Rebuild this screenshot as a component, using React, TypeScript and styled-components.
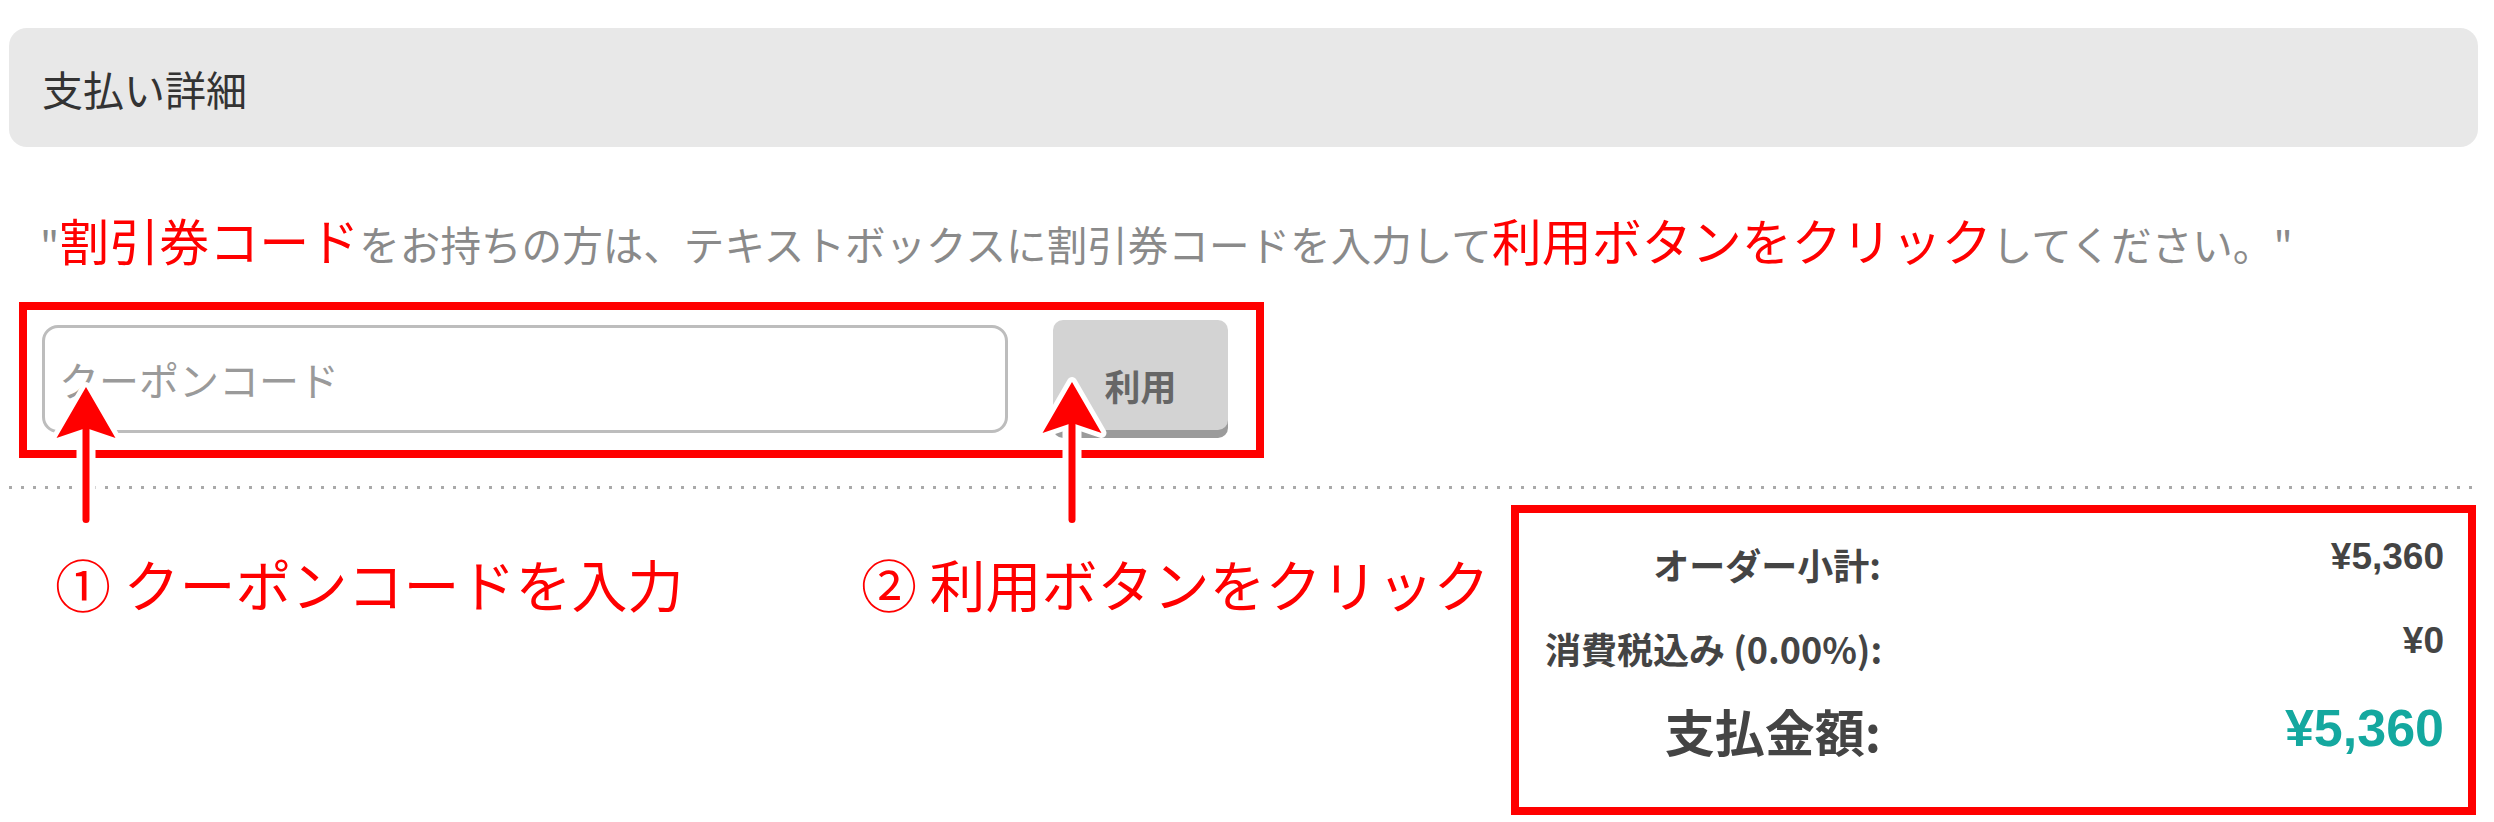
import styled, { createGlobalStyle } from "styled-components";

const GlobalStyle = createGlobalStyle`
  body {
    margin: 0;
    background: #fff;
    font-family: "Noto Sans CJK JP", "Noto Sans", sans-serif;
  }
`;

const Page = styled.div`
  padding: 28px 16px 0 9px;
`;

const HeaderBar = styled.div`
  height: 119px;
  display: flex;
  align-items: center;
  padding-left: 33px;
  background: #e8e8e8;
  border-radius: 18px;
  color: #333;
  font-size: 41px;
`;

const Notice = styled.p`
  margin: 62px 0 0;
  padding-left: 31px;
  color: #8a8a8a;
  font-size: 40.6px;
  line-height: 60px;
  white-space: nowrap;
`;

const Em = styled.span`
  color: #f00;
  font-size: 50px;
`;

const CouponBox = styled.div`
  position: relative;
  box-sizing: border-box;
  width: 1245px;
  height: 156px;
  margin: 28px 0 0 10px;
  padding: 10px 15px;
  border: 8px solid #f00;
  display: flex;
  align-items: flex-start;
`;

const CouponInput = styled.input`
  box-sizing: border-box;
  width: 966px;
  height: 108px;
  margin-top: 5px;
  padding: 0 14px;
  border: 3px solid #bdbdbd;
  border-radius: 16px;
  font-family: inherit;
  font-size: 40px;
  color: #333;
  outline: none;
  &::placeholder {
    color: #9a9a9a;
  }
`;

const ApplyButton = styled.button`
  box-sizing: border-box;
  width: 175px;
  height: 110px;
  margin-left: 45px;
  padding-top: 20px;
  border: none;
  border-radius: 10px;
  background: #d3d3d3;
  box-shadow: 0 8px 0 #9b9b9b;
  font-family: inherit;
  font-size: 36px;
  font-weight: 700;
  color: #666;
`;

const ArrowSvg = styled.svg<{ $x: number; $y: number }>`
  position: absolute;
  left: ${(p) => p.$x}px;
  top: ${(p) => p.$y}px;
  overflow: visible;
`;

const Divider = styled.div`
  height: 3px;
  margin-top: 28px;
  background: repeating-linear-gradient(90deg, #aaa 0 3px, transparent 3px 12px);
`;

const BottomRow = styled.div`
  display: flex;
  justify-content: space-between;
  align-items: flex-start;
  margin-top: 16px;
`;

const Steps = styled.div`
  display: grid;
  grid-template-columns: 806px auto;
  padding-left: 46px;
  margin-top: 50px;
`;

const Step = styled.div`
  color: #f00;
  font-size: 56px;
  line-height: 1;
  white-space: nowrap;
`;

const SummaryBox = styled.div`
  box-sizing: border-box;
  width: 965px;
  height: 310px;
  margin-right: 2px;
  padding: 24px 24px 0 26px;
  border: 8px solid #f00;
`;

const SummaryRow = styled.div<{ $gap: number }>`
  display: grid;
  grid-template-columns: 336px 1fr;
  align-items: start;
  margin-top: ${(p) => p.$gap}px;
`;

const SumLabel = styled.div<{ $size: number; $line: number; $shift: number }>`
  padding-top: ${(p) => p.$shift}px;
  text-align: right;
  color: #444;
  font-weight: 700;
  font-size: ${(p) => p.$size}px;
  line-height: ${(p) => p.$line}px;
  white-space: nowrap;
`;

const SumValue = styled.div<{ $size: number; $line: number; $accent?: boolean }>`
  text-align: right;
  color: ${(p) => (p.$accent ? "#14a89f" : "#444")};
  font-family: "Liberation Sans", "Noto Sans CJK JP", sans-serif;
  font-weight: 700;
  font-size: ${(p) => p.$size}px;
  line-height: ${(p) => p.$line}px;
`;

function Arrow({ x, y, length }: { x: number; y: number; length: number }) {
  const head = "M36 6 L65.5 57 L36 47 L6.5 57 Z";
  const bottom = 6 + length - 3.5;
  return (
    <ArrowSvg $x={x} $y={y} width={72} height={length + 16} viewBox={`0 0 72 ${length + 16}`}>
      <path d={head} fill="#fff" stroke="#fff" strokeWidth={10} strokeLinejoin="round" />
      <line x1={36} y1={44} x2={36} y2={bottom} stroke="#fff" strokeWidth={19} strokeLinecap="round" />
      <path d={head} fill="#f00" />
      <line x1={36} y1={44} x2={36} y2={bottom} stroke="#f00" strokeWidth={7} strokeLinecap="round" />
    </ArrowSvg>
  );
}

const rows = [
  { label: "オーダー小計:", value: "¥5,360", size: 36, vsize: 37, line: 40, shift: 7, gap: 0 },
  { label: "消費税込み (0.00%):", value: "¥0", size: 36, vsize: 37, line: 40, shift: 7, gap: 37 },
  { label: "支払金額:", value: "¥5,360", size: 50, vsize: 52, line: 60, shift: 2, gap: 30, accent: true },
];

export default function App() {
  return (
    <Page>
      <GlobalStyle />
      <HeaderBar>支払い詳細</HeaderBar>
      <Notice>
        "<Em>割引券コード</Em>をお持ちの方は、テキストボックスに割引券コードを入力して
        <Em>利用ボタンをクリック</Em>してください。"
      </Notice>
      <CouponBox>
        <CouponInput type="text" placeholder="クーポンコード" />
        <ApplyButton type="button">利用</ApplyButton>
        <Arrow x={23} y={71} length={136} />
        <Arrow x={1009} y={66} length={141} />
      </CouponBox>
      <Divider />
      <BottomRow>
        <Steps>
          <Step>① クーポンコードを入力</Step>
          <Step>② 利用ボタンをクリック</Step>
        </Steps>
        <SummaryBox>
          {rows.map((r) => (
            <SummaryRow key={r.label} $gap={r.gap}>
              <SumLabel $size={r.size} $line={r.line} $shift={r.shift}>
                {r.label}
              </SumLabel>
              <SumValue $size={r.vsize} $line={r.line} $accent={r.accent}>
                {r.value}
              </SumValue>
            </SummaryRow>
          ))}
        </SummaryBox>
      </BottomRow>
    </Page>
  );
}
